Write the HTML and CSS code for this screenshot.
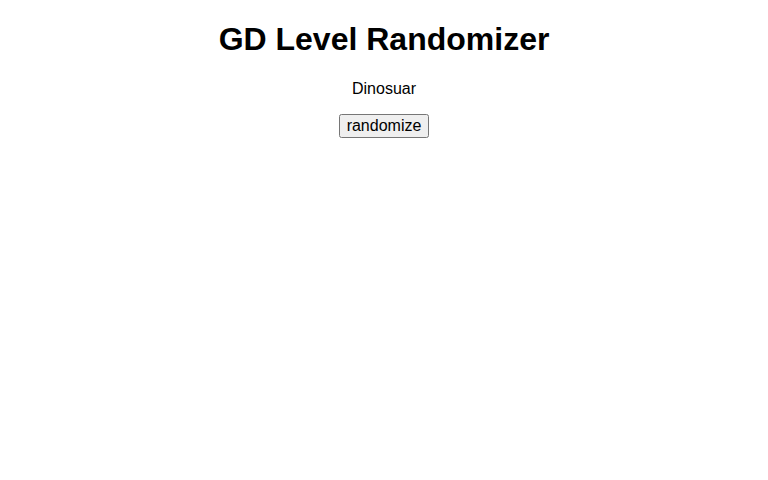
FILE: index.html
```html
<!DOCTYPE html>
<html lang="en">
<head>
  <meta charset="UTF-8" />
  <title>GD Level Randomizer</title>
  <link rel="stylesheet" href="styles.css">
</head>
<body>
  <h1>GD Level Randomizer</h1>
  <p id="level">Dinosuar</p>
  <div class="actions">
    <button id="randomize">randomize</button>
  </div>
</body>
</html>
```

FILE: styles.css
```css
body {
  font-family: "Liberation Sans", Arial, sans-serif;
  text-align: center;
  background: white;
  color: black;
}
h1 {
  font-size: 32px;
  margin: 13px 0 22px;
}
p {
  font-size: 16px;
}
.actions {
  margin-top: 16px;
}
button {
  font-family: "Liberation Sans", Arial, sans-serif;
  font-size: 16px;
}
```
